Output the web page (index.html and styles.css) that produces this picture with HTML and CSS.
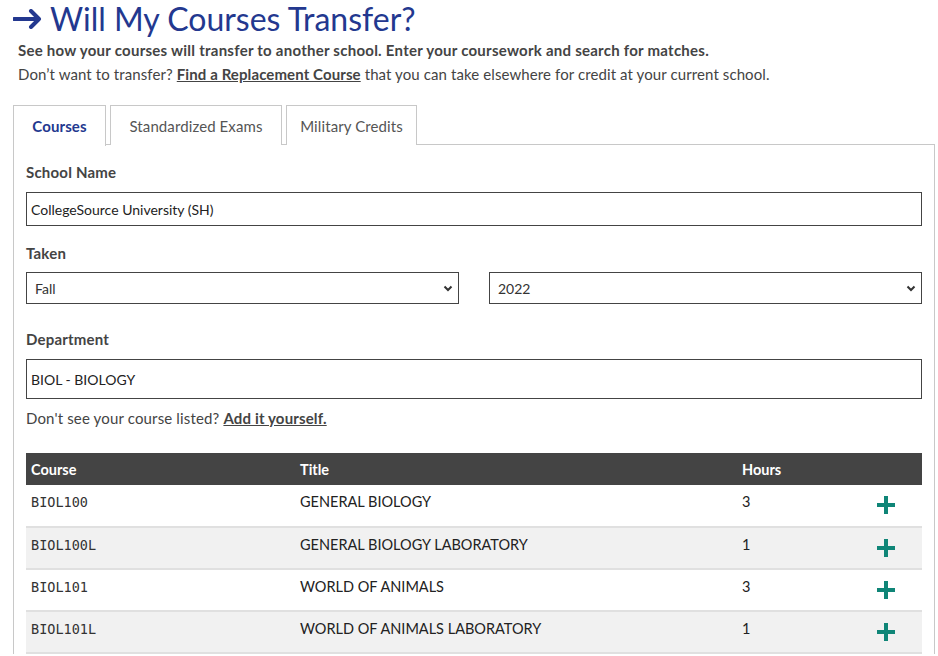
FILE: index.html
```html
<!DOCTYPE html>
<html lang="en">
<head>
<meta charset="utf-8">
<title>Will My Courses Transfer?</title>
<link rel="stylesheet" href="styles.css">
</head>
<body>
<div class="page">
  <h1 class="title">
    <svg class="title-arrow" width="30" height="20" viewBox="0 0 30 20" aria-hidden="true">
      <path d="M1 10 H26 M18 2 L26 10 L18 18" fill="none" stroke="#23388f" stroke-width="4" stroke-linecap="round" stroke-linejoin="round"/>
    </svg>
    <span>Will My Courses Transfer?</span>
  </h1>
  <div class="intro">
    <p class="intro-lead">See how your courses will transfer to another school. Enter your coursework and search for matches.</p>
    <p class="intro-alt">Don’t want to transfer? <a href="#" class="strong-link">Find a Replacement Course</a> that you can take elsewhere for credit at your current school.</p>
  </div>

  <div class="tabs">
    <div class="tab tab-active">Courses</div>
    <div class="tab">Standardized Exams</div>
    <div class="tab">Military Credits</div>
  </div>

  <div class="panel">
    <label class="field-label">School Name</label>
    <input class="text-input school-input" type="text" value="CollegeSource University (SH)">

    <label class="field-label label-taken">Taken</label>
    <div class="select-row">
      <div class="select-box">
        <span>Fall</span>
        <svg width="10" height="7" viewBox="0 0 10 7" aria-hidden="true"><path d="M1.5 1.5 L5 5 L8.5 1.5" fill="none" stroke="#333" stroke-width="2"/></svg>
      </div>
      <div class="select-box">
        <span>2022</span>
        <svg width="10" height="7" viewBox="0 0 10 7" aria-hidden="true"><path d="M1.5 1.5 L5 5 L8.5 1.5" fill="none" stroke="#333" stroke-width="2"/></svg>
      </div>
    </div>

    <label class="field-label label-dept">Department</label>
    <input class="text-input dept-input" type="text" value="BIOL - BIOLOGY">

    <p class="note">Don't see your course listed? <a href="#" class="strong-link">Add it yourself.</a></p>

    <table class="courses">
      <thead>
        <tr><th class="c-course">Course</th><th class="c-title">Title</th><th class="c-hours">Hours</th><th class="c-add"></th></tr>
      </thead>
      <tbody>
        <tr>
          <td class="code">BIOL100</td><td>GENERAL BIOLOGY</td><td>3</td>
          <td class="add"><svg width="20" height="20" viewBox="0 0 20 20"><path d="M10 1 V19 M1 10 H19" stroke="#0f8577" stroke-width="4"/></svg></td>
        </tr>
        <tr>
          <td class="code">BIOL100L</td><td>GENERAL BIOLOGY LABORATORY</td><td>1</td>
          <td class="add"><svg width="20" height="20" viewBox="0 0 20 20"><path d="M10 1 V19 M1 10 H19" stroke="#0f8577" stroke-width="4"/></svg></td>
        </tr>
        <tr>
          <td class="code">BIOL101</td><td>WORLD OF ANIMALS</td><td>3</td>
          <td class="add"><svg width="20" height="20" viewBox="0 0 20 20"><path d="M10 1 V19 M1 10 H19" stroke="#0f8577" stroke-width="4"/></svg></td>
        </tr>
        <tr>
          <td class="code">BIOL101L</td><td>WORLD OF ANIMALS LABORATORY</td><td>1</td>
          <td class="add"><svg width="20" height="20" viewBox="0 0 20 20"><path d="M10 1 V19 M1 10 H19" stroke="#0f8577" stroke-width="4"/></svg></td>
        </tr>
      </tbody>
    </table>
  </div>
</div>
</body>
</html>
```

FILE: styles.css
```css
html, body {
  margin: 0;
  padding: 0;
  background: #fff;
}
body {
  font-family: "Lato", "Open Sans", "Liberation Sans", sans-serif;
  color: #444;
  font-size: 14px;
}
.page {
  width: 922px;
  padding-left: 13px;
  padding-top: 2px;
}
.title {
  margin: 0;
  height: 34px;
  display: flex;
  align-items: center;
  gap: 7px;
  font-weight: 400;
  font-size: 32px;
  color: #23388f;
  line-height: 34px;
}
.title-arrow {
  flex: none;
}
.intro {
  padding-left: 5px;
}
.intro p {
  margin: 0;
  font-size: 15px;
  line-height: 24px;
}
.intro-lead {
  padding-top: 2px;
  font-weight: 700;
  letter-spacing: 0.25px;
}
.intro-alt {
  letter-spacing: 0.1px;
}
.strong-link {
  color: #444;
  font-weight: 700;
  text-decoration: underline;
}
.tabs {
  display: flex;
  gap: 4px;
  margin-top: 19px;
  height: 40px;
  position: relative;
  z-index: 1;
}
.tab {
  box-sizing: border-box;
  height: 40px;
  border: 1px solid #c8c8c8;
  border-bottom: none;
  display: flex;
  align-items: center;
  justify-content: center;
  color: #555;
  font-size: 15px;
  letter-spacing: 0.1px;
  background: #fff;
}
.tab:nth-child(1) { width: 93px; }
.tab:nth-child(2) { width: 172px; }
.tab:nth-child(3) { width: 131px; }
.tab-active {
  color: #23388f;
  font-weight: 700;
  height: 41px;
}
.panel {
  box-sizing: border-box;
  width: 922px;
  margin-top: -1px;
  border: 1px solid #c8c8c8;
  border-bottom: none;
  padding: 17px 12px 0 12px;
  display: flex;
  flex-direction: column;
}
.field-label {
  display: block;
  font-weight: 700;
  line-height: 20px;
  font-size: 15px;
  letter-spacing: 0.2px;
  color: #444;
}
.text-input {
  box-sizing: border-box;
  width: 896px;
  margin: 10px 0 0 0;
  border: 1px solid #444;
  border-radius: 0;
  font-family: "Lato", "Liberation Sans", sans-serif;
  font-size: 14px;
  color: #222;
  padding: 0 4px;
  outline: none;
}
.school-input { height: 34px; }
.dept-input { height: 40px; }
.label-taken { margin-top: 17px; }
.select-row {
  margin-top: 9px;
  display: grid;
  grid-template-columns: 433px 433px;
  column-gap: 30px;
}
.select-box {
  box-sizing: border-box;
  height: 32px;
  border: 1px solid #444;
  display: flex;
  align-items: center;
  justify-content: space-between;
  padding: 0 5px 0 8px;
  color: #333;
  font-size: 14px;
}
.label-dept { margin-top: 25px; }
.note {
  margin: 9px 0 0 0;
  line-height: 20px;
  font-size: 15px;
  letter-spacing: 0.15px;
}
.courses {
  margin-top: 25px;
  width: 896px;
  border-collapse: collapse;
  table-layout: fixed;
}
.courses th {
  background: #444;
  color: #fff;
  text-align: left;
  font-weight: 700;
  height: 32px;
  padding: 0 5px;
  font-size: 14.5px;
  box-sizing: border-box;
}
.c-course { width: 269px; }
.c-title { width: 442px; }
.c-hours { width: 113px; }
.courses td {
  height: 42px;
  box-sizing: border-box;
  vertical-align: top;
  padding: 8px 5px 0 5px;
  line-height: 18px;
  color: #222;
  font-size: 14.5px;
  border-bottom: 2px solid #e0e0e0;
}
.courses tbody tr:nth-child(even) td {
  background: #f1f1f1;
}
.courses td.code {
  font-family: "DejaVu Sans Mono", "Liberation Mono", monospace;
  font-size: 13.5px;
  color: #333;
}
.courses td.add {
  text-align: center;
  padding-top: 10px;
}
.courses td.add svg {
  display: inline-block;
}
```
